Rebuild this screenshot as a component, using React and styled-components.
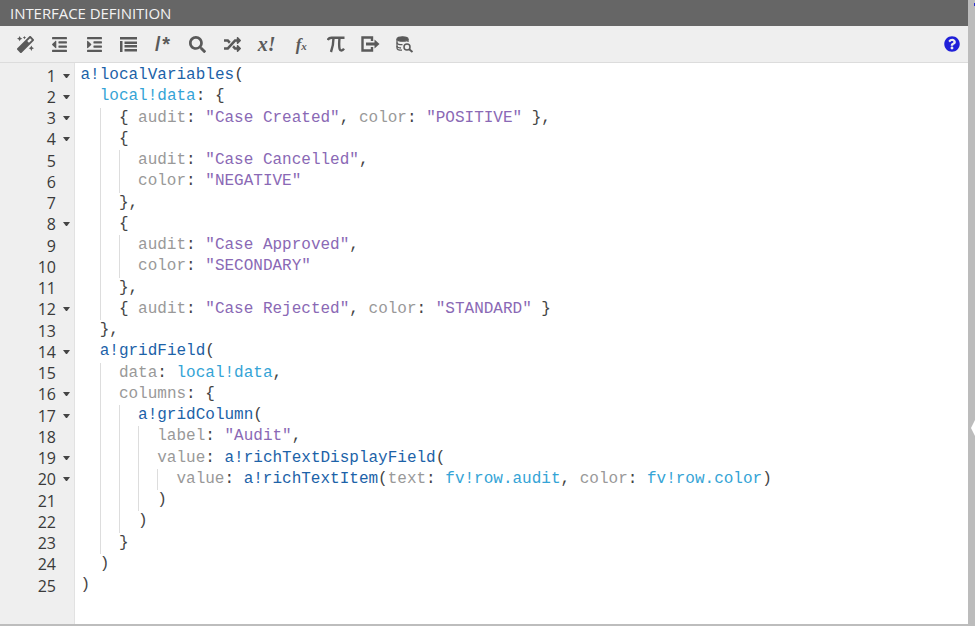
import React from "react";
import styled, { createGlobalStyle } from "styled-components";
import { FaMagic, FaOutdent, FaIndent, FaSearch, FaRandom, FaQuestionCircle } from "react-icons/fa";

const GlobalStyle = createGlobalStyle`
  html, body { margin: 0; padding: 0; background: #fff; }
  body { font-family: "Open Sans", sans-serif; overflow: hidden; }
`;

const Page = styled.div`
  display: flex;
  width: 975px;
  height: 626px;
  overflow: hidden;
`;

const Panel = styled.div`
  flex: 1;
  display: flex;
  flex-direction: column;
  min-width: 0;
  border-bottom: 2px solid #bdbdbd;
`;

const Divider = styled.div`
  position: relative;
  width: 7px;
  background: #bcbcbc;
  &::before {
    content: "";
    position: absolute;
    right: 0;
    top: 3px;
    width: 1px;
    height: 3px;
    background: #2a2ad0;
  }
  &::after {
    content: "";
    position: absolute;
    left: 3px;
    top: 420px;
    border-style: solid;
    border-width: 8px 4px 8px 0;
    border-color: transparent #fff transparent transparent;
  }
`;

const TitleBar = styled.div`
  height: 26px;
  background: #666;
  color: #f2f2f2;
  font-size: 15px;
  line-height: 26px;
  letter-spacing: -0.05px;
  padding-left: 10px;
`;

const Toolbar = styled.div`
  height: 36px;
  display: flex;
  align-items: center;
  padding-left: 8px;
  padding-right: 4px;
  background: #efefef;
  border-bottom: 1px solid #dcdcdc;
`;

const Tool = styled.div`
  width: 34.5px;
  height: 36px;
  display: flex;
  align-items: center;
  justify-content: center;
  color: #5a5a5a;
  font-size: 17px;
`;

const Help = styled(Tool)`
  margin-left: auto;
  width: 24px;
  color: #2020d8;
  font-size: 16px;
`;

const TextTool = styled.span`
  font-family: ${p => (p.$serif ? '"Liberation Serif", serif' : '"Liberation Sans", sans-serif')};
  font-weight: 700;
  font-style: ${p => (p.$upright ? "normal" : "italic")};
  font-size: ${p => p.$size || 18}px;
  letter-spacing: ${p => p.$spacing || 0}px;
  line-height: 1;
  white-space: nowrap;
  small { font-size: 11px; font-weight: 700; }
`;

const Editor = styled.div`
  flex: 1;
  display: flex;
  min-height: 0;
`;

const Gutter = styled.div`
  width: 74px;
  padding-top: 2px;
  background: #efefef;
  border-right: 1px solid #e2e2e2;
`;

const GutterRow = styled.div`
  height: 21.25px;
  display: flex;
  align-items: center;
  justify-content: flex-end;
  padding-right: 4px;
  font-size: 16px;
  color: #3a3a3a;
`;

const Fold = styled.span`
  width: 7px;
  height: 0;
  margin-left: 7px;
  border-style: solid;
  border-width: 4px 3.5px 0 3.5px;
  border-color: ${p => (p.$on ? "#444" : "transparent")} transparent transparent;
  box-sizing: border-box;
`;

const Code = styled.div`
  flex: 1;
  padding: 2px 0 0 5.5px;
  font-family: "Liberation Mono", monospace;
  font-size: 16px;
  color: #444;
`;

const Line = styled.div`
  height: 21.25px;
  line-height: 21.25px;
  display: flex;
  white-space: pre;
`;

const Indent = styled.span`
  width: 19.2px;
  box-sizing: border-box;
  border-left: 1px solid ${p => (p.$guide ? "#ddd" : "transparent")};
`;

const Fn = styled.span`color: #1c62a8;`;
const Local = styled.span`color: #35a4d6;`;
const Str = styled.span`color: #8a69b5;`;
const Key = styled.span`color: #999;`;

const IndentOutline = () => (
  <svg width="17" height="15" viewBox="0 0 17 15" fill="currentColor">
    <rect x="0" y="0" width="17" height="2.5" />
    <rect x="0" y="4" width="2.5" height="11" />
    <rect x="4.500" y="4.500" width="12.500" height="2.500" />
    <rect x="4.500" y="8" width="12.500" height="2.500" />
    <rect x="4.500" y="12" width="12.500" height="2.500" />
  </svg>
);

const PiIcon = () => (
  <svg width="18" height="17" viewBox="0 0 18 17" fill="none" stroke="currentColor" strokeWidth="2.4">
    <path d="M.7 4C1.500 2.300 2.700 1.700 4.500 1.700H17.500" />
    <path d="M6.500 2c0 5-.8 9-2.500 14" />
    <path d="M12.500 2c-.5 5-.6 8 .1 11 .5 2 2.800 2.200 4.400-.3" />
  </svg>
);

const ExitIcon = () => (
  <svg width="19" height="16" viewBox="0 0 19 16" fill="none" stroke="currentColor" strokeWidth="2.400">
    <path d="M11 5V1.500H1.500v13H11v-3.500" />
    <path d="M5 8h10" strokeWidth="3" />
    <path d="M13.500 3.500l5 4.500-5 4.500z" fill="currentColor" stroke="none" />
  </svg>
);

const DbSearchIcon = () => (
  <svg width="18" height="17" viewBox="0 0 18 17" fill="none" stroke="currentColor" strokeWidth="1.300">
    <ellipse cx="6.500" cy="3" rx="5.500" ry="2.200" fill="currentColor" />
    <path d="M1 3v9c0 1.200 2.500 2.200 5 2.200" />
    <path d="M12 3v3" />
    <path d="M1 6.500c0 1.200 2.500 2.200 5.500 2.200" />
    <path d="M1 10c0 1 1.500 1.800 4 2" />
    <circle cx="11" cy="11" r="3" strokeWidth="1.500" />
    <path d="M13.200 13.200L16.500 16" strokeWidth="2" />
  </svg>
);

const tools = [
  <FaMagic />,
  <FaOutdent />,
  <FaIndent />,
  <IndentOutline />,
  <TextTool $upright $size={20} $spacing={1.5}>/*</TextTool>,
  <FaSearch />,
  <FaRandom />,
  <TextTool $serif $size={20}>x!</TextTool>,
  <TextTool $serif $size={17}>f<small>x</small></TextTool>,
  <PiIcon />,
  <ExitIcon />,
  <DbSearchIcon />,
];

// level = indent depth, first level carries no guide
const lines = [
  [0, true, <><Fn>a!localVariables</Fn>(</>],
  [1, true, <><Local>local!data</Local>: {"{"}</>],
  [2, true, <>{"{ "}<Key>audit</Key>: <Str>"Case Created"</Str>, <Key>color</Key>: <Str>"POSITIVE"</Str>{" },"}</>],
  [2, true, <>{"{"}</>],
  [3, false, <><Key>audit</Key>: <Str>"Case Cancelled"</Str>,</>],
  [3, false, <><Key>color</Key>: <Str>"NEGATIVE"</Str></>],
  [2, false, <>{"},"}</>],
  [2, true, <>{"{"}</>],
  [3, false, <><Key>audit</Key>: <Str>"Case Approved"</Str>,</>],
  [3, false, <><Key>color</Key>: <Str>"SECONDARY"</Str></>],
  [2, false, <>{"},"}</>],
  [2, true, <>{"{ "}<Key>audit</Key>: <Str>"Case Rejected"</Str>, <Key>color</Key>: <Str>"STANDARD"</Str>{" }"}</>],
  [1, false, <>{"},"}</>],
  [1, true, <><Fn>a!gridField</Fn>(</>],
  [2, false, <><Key>data</Key>: <Local>local!data</Local>,</>],
  [2, true, <><Key>columns</Key>: {"{"}</>],
  [3, true, <><Fn>a!gridColumn</Fn>(</>],
  [4, false, <><Key>label</Key>: <Str>"Audit"</Str>,</>],
  [4, true, <><Key>value</Key>: <Fn>a!richTextDisplayField</Fn>(</>],
  [5, true, <><Key>value</Key>: <Fn>a!richTextItem</Fn>(<Key>text</Key>: <Local>fv!row.audit</Local>, <Key>color</Key>: <Local>fv!row.color</Local>)</>],
  [4, false, <>)</>],
  [3, false, <>)</>],
  [2, false, <>{"}"}</>],
  [1, false, <>)</>],
  [0, false, <>)</>],
];

export default function App() {
  return (
    <Page>
      <GlobalStyle />
      <Panel>
        <TitleBar>INTERFACE DEFINITION</TitleBar>
        <Toolbar>
          {tools.map((icon, i) => (
            <Tool key={i}>{icon}</Tool>
          ))}
          <Help>
            <FaQuestionCircle />
          </Help>
        </Toolbar>
        <Editor>
          <Gutter>
            {lines.map(([, fold], i) => (
              <GutterRow key={i}>
                {i + 1}
                <Fold $on={fold} />
              </GutterRow>
            ))}
          </Gutter>
          <Code>
            {lines.map(([level, , content], i) => (
              <Line key={i}>
                {Array.from({ length: level }, (_, n) => (
                  <Indent key={n} $guide={n > 0} />
                ))}
                <span>{content}</span>
              </Line>
            ))}
          </Code>
        </Editor>
      </Panel>
      <Divider />
    </Page>
  );
}
